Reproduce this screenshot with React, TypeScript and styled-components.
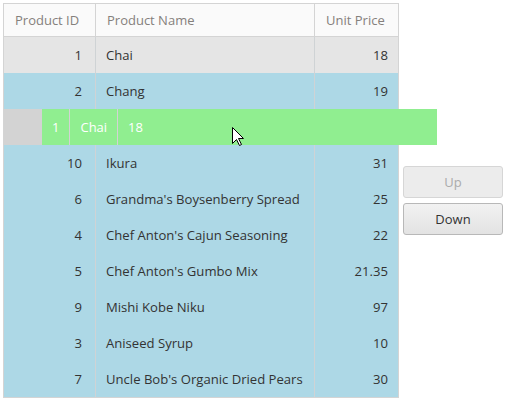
import React from "react";
import styled, { createGlobalStyle } from "styled-components";

const Global = createGlobalStyle`
  html, body { margin: 0; padding: 0; background: #fff; }
  body { font-family: "Open Sans", "Noto Sans", sans-serif; font-size: 13px; color: #333; }
`;

const Page = styled.div`
  position: relative;
  display: flex;
  align-items: center;
  gap: 4px;
  padding: 3px 0 0 3px;
  width: 507px;
  height: 402px;
  box-sizing: border-box;
`;

const Grid = styled.div`
  display: grid;
  grid-template-columns: 92px 219px 83px;
  border: 1px solid #d4d4d4;
  align-self: flex-start;
`;

const HeadCell = styled.div<{ $last?: boolean }>`
  height: 32px;
  line-height: 32px;
  padding: 0 10px 0 11px;
  background: #fafafa;
  color: #85807c;
  border-bottom: 1px solid #d4d4d4;
  border-right: ${(p) => (p.$last ? "none" : "1px solid #d4d4d4")};
  white-space: nowrap;
`;

const Cell = styled.div<{ $bg: string; $align: "left" | "right"; $last?: boolean; $pr?: number }>`
  height: 36px;
  line-height: 36px;
  padding: 0 ${(p) => p.$pr ?? 10}px 0 10px;
  background: ${(p) => p.$bg};
  text-align: ${(p) => p.$align};
  border-right: ${(p) => (p.$last ? "none" : "1px solid #cfd3d5")};
  white-space: nowrap;
  overflow: hidden;
  font-size: 13.1px;
`;

const Buttons = styled.div`
  display: flex;
  flex-direction: column;
  gap: 5px;
  margin-top: -4px;
`;

const Button = styled.button<{ $disabled?: boolean }>`
  width: 100px;
  height: 32px;
  border-radius: 3px;
  font-family: "Open Sans", "Noto Sans", sans-serif;
  font-size: 13px;
  padding: 0;
  border: 1px solid ${(p) => (p.$disabled ? "#d6d6d6" : "#b8b8b8")};
  background: ${(p) => (p.$disabled ? "#ececec" : "linear-gradient(#f2f2f2, #e3e3e3)")};
  color: ${(p) => (p.$disabled ? "#ababab" : "#333")};
`;

const DragRow = styled.div`
  position: absolute;
  left: 42px;
  top: 109px;
  width: 395px;
  height: 36px;
  background: #90ee90;
  display: flex;
  color: #fff;
`;

const DragCell = styled.div<{ $grow?: boolean }>`
  padding: 0 10px;
  line-height: 36px;
  border-right: ${(p) => (p.$grow ? "none" : "1px solid #d3d3d3")};
  flex: ${(p) => (p.$grow ? "1" : "none")};
`;

const Cursor = styled.svg`
  position: absolute;
  left: 232px;
  top: 127px;
`;

type Row = { id: string; name: string; price: string; bg: string };

const rows: Row[] = [
  { id: "1", name: "Chai", price: "18", bg: "#e5e5e5" },
  { id: "2", name: "Chang", price: "19", bg: "#add8e6" },
  { id: "", name: "", price: "", bg: "#d3d3d3" },
  { id: "10", name: "Ikura", price: "31", bg: "#add8e6" },
  { id: "6", name: "Grandma's Boysenberry Spread", price: "25", bg: "#add8e6" },
  { id: "4", name: "Chef Anton's Cajun Seasoning", price: "22", bg: "#add8e6" },
  { id: "5", name: "Chef Anton's Gumbo Mix", price: "21.35", bg: "#add8e6" },
  { id: "9", name: "Mishi Kobe Niku", price: "97", bg: "#add8e6" },
  { id: "3", name: "Aniseed Syrup", price: "10", bg: "#add8e6" },
  { id: "7", name: "Uncle Bob's Organic Dried Pears", price: "30", bg: "#add8e6" },
];

export default function App() {
  return (
    <Page>
      <Global />
      <Grid>
        <HeadCell>Product ID</HeadCell>
        <HeadCell>Product Name</HeadCell>
        <HeadCell $last>Unit Price</HeadCell>
        {rows.map((r, i) => (
          <React.Fragment key={i}>
            <Cell $bg={r.bg} $align="right" $pr={13}>{r.id}</Cell>
            <Cell $bg={r.bg} $align="left">{r.name}</Cell>
            <Cell $bg={r.bg} $align="right" $last>{r.price}</Cell>
          </React.Fragment>
        ))}
      </Grid>
      <Buttons>
        <Button $disabled disabled>Up</Button>
        <Button>Down</Button>
      </Buttons>
      <DragRow>
        <DragCell>1</DragCell>
        <DragCell>Chai</DragCell>
        <DragCell $grow>18</DragCell>
      </DragRow>
      <Cursor width="13" height="20" viewBox="0 0 13 20">
        <path d="M0.5 0.5 L0.5 16.5 L4.5 12.5 L7.5 18.5 L9.5 17.5 L6.5 11.5 L11.5 11.5 Z" fill="#fff" stroke="#000" strokeWidth="1" />
      </Cursor>
    </Page>
  );
}
